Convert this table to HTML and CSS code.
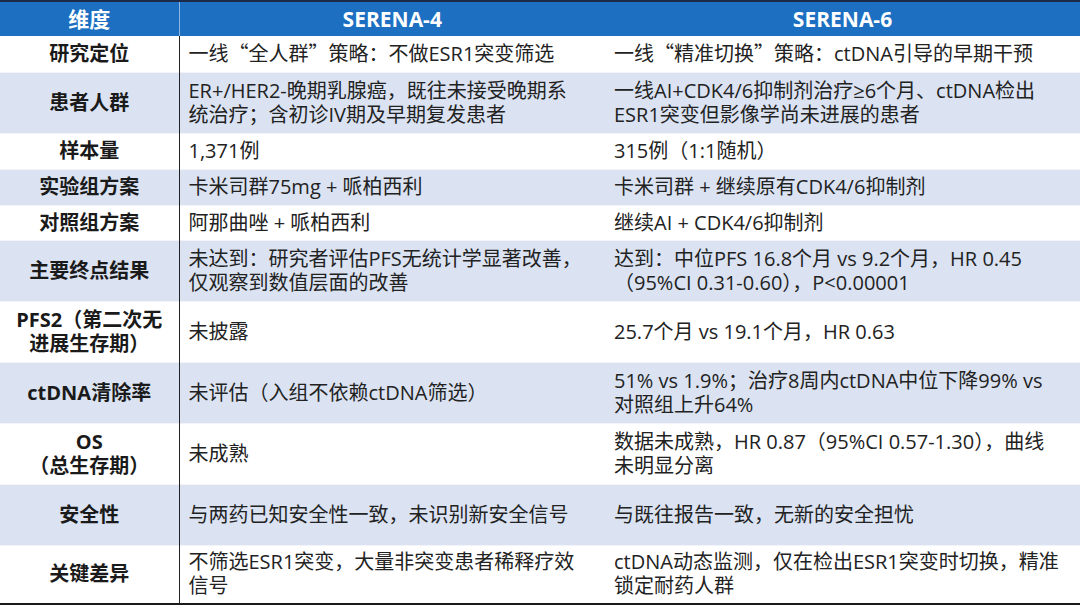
FILE: index.html
```html
<!DOCTYPE html>
<html lang="zh-CN">
<head>
<meta charset="utf-8">
<title>SERENA-4 vs SERENA-6</title>
<link rel="stylesheet" href="styles.css">
</head>
<body>
<table class="cmp">
  <colgroup>
    <col class="c1"><col class="c2"><col class="c3">
  </colgroup>
  <thead>
    <tr class="head">
      <th class="h1">维度</th>
      <th class="h2">SERENA-4</th>
      <th class="h3">SERENA-6</th>
    </tr>
  </thead>
  <tbody>
    <tr class="r-s odd"><th>研究定位</th><td>一线<span class="q">“</span>全人群<span class="q">”</span>策略：不做ESR1突变筛选</td><td>一线<span class="q">“</span>精准切换<span class="q">”</span>策略：ctDNA引导的早期干预</td></tr>
    <tr class="r-l even"><th>患者人群</th><td>ER+/HER2-晚期乳腺癌，既往未接受晚期系<br>统治疗；含初诊IV期及早期复发患者</td><td>一线AI+CDK4/6抑制剂治疗≥6个月、ctDNA检出<br>ESR1突变但影像学尚未进展的患者</td></tr>
    <tr class="r-s odd"><th>样本量</th><td>1,371例</td><td>315例（1:1随机）</td></tr>
    <tr class="r-s even"><th>实验组方案</th><td>卡米司群75mg + 哌柏西利</td><td>卡米司群 + 继续原有CDK4/6抑制剂</td></tr>
    <tr class="r-t odd"><th>对照组方案</th><td>阿那曲唑 + 哌柏西利</td><td>继续AI + CDK4/6抑制剂</td></tr>
    <tr class="r-l even"><th>主要终点结果</th><td>未达到：研究者评估PFS无统计学显著改善，<br>仅观察到数值层面的改善</td><td>达到：中位PFS 16.8个月 vs 9.2个月，HR 0.45<br>（95%CI 0.31-0.60），P&lt;0.00001</td></tr>
    <tr class="r-l odd"><th>PFS2（第二次无<br>进展生存期）</th><td>未披露</td><td>25.7个月 vs 19.1个月，HR 0.63</td></tr>
    <tr class="r-l even"><th>ctDNA清除率</th><td>未评估（入组不依赖ctDNA筛选）</td><td>51% vs 1.9%；治疗8周内ctDNA中位下降99% vs<br>对照组上升64%</td></tr>
    <tr class="r-l odd"><th>OS<br>（总生存期）</th><td>未成熟</td><td>数据未成熟，HR 0.87（95%CI 0.57-1.30），曲线<br>未明显分离</td></tr>
    <tr class="r-l even"><th>安全性</th><td>与两药已知安全性一致，未识别新安全信号</td><td>与既往报告一致，无新的安全担忧</td></tr>
    <tr class="r-e odd"><th>关键差异</th><td>不筛选ESR1突变，大量非突变患者稀释疗效<br>信号</td><td>ctDNA动态监测，仅在检出ESR1突变时切换，精准<br>锁定耐药人群</td></tr>
  </tbody>
</table>
</body>
</html>
```

FILE: styles.css
```css
html, body {
  margin: 0;
  padding: 0;
  background: #ffffff;
}

.cmp {
  width: 1080px;
  border-collapse: collapse;
  table-layout: fixed;
  font-family: "Open Sans", "Noto Sans CJK SC", sans-serif;
  color: #1e1e1e;
  border-top: 2px solid #1d2a4a;
  border-bottom: 2px solid #1a1a1a;
}

.c1 { width: 179px; }
.c2 { width: 426px; }
.c3 { width: 475px; }

.head {
  height: 35px;
  background: #1c6fc1;
}

.head th {
  color: #ffffff;
  font-family: "Open Sans", "Noto Sans CJK SC", sans-serif;
  font-weight: 700;
  font-size: 21px;
  text-align: center;
  padding: 0;
  line-height: 24px;
}

.head .h1 {
  border-right: 1px solid #8fb6e0;
}

tbody th {
  font-weight: 700;
  font-size: 20px;
  text-align: center;
  border-right: 1px solid #222222;
  padding: 0 6px;
  line-height: 24px;
  color: #1a1a1a;
}

tbody td {
  font-size: 20px;
  text-align: left;
  padding: 0 8px 0 9px;
  line-height: 24px;
  white-space: nowrap;
  color: #222222;
}

.q {
  font-family: "Noto Sans CJK SC", sans-serif;
}

.r-s { height: 36px; }
.r-t { height: 35px; }
.r-l { height: 61px; }
.r-e { height: 59px; }

.odd { background: #ffffff; }
.even { background: #dbe3f2; }

tbody tr + tr th,
tbody tr + tr td {
  border-top: 1px solid #f2f4f9;
}
```
